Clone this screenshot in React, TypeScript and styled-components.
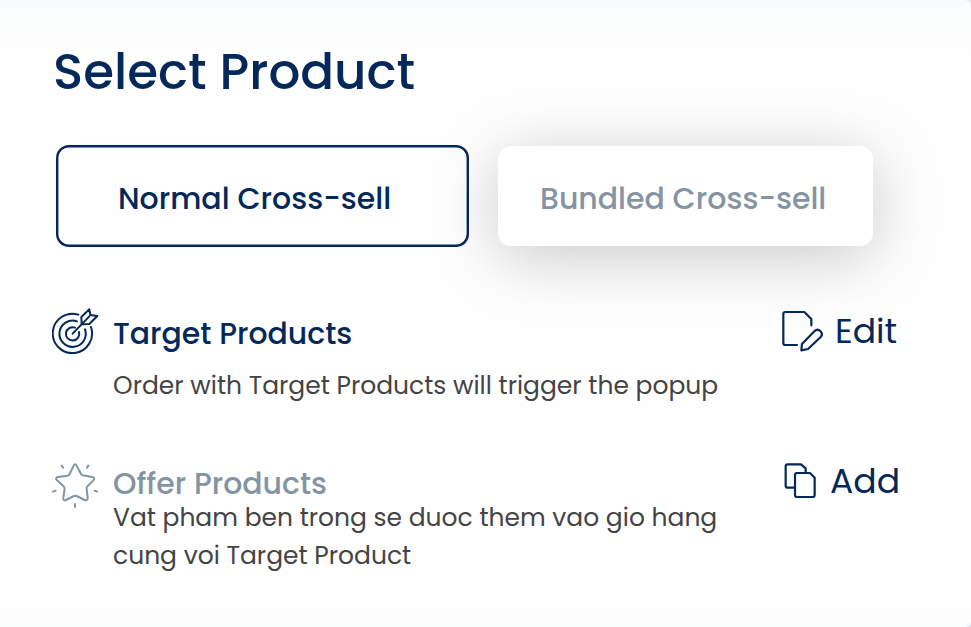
import React from "react";
import styled, { createGlobalStyle } from "styled-components";

const navy = "#05285a";
const slate = "#8594a3";

const GlobalStyle = createGlobalStyle`
  *, *::before, *::after { box-sizing: border-box; }
  body { margin: 0; background: #e3e6ef; font-family: Poppins, Inter, sans-serif; }
  h1, h2, p { margin: 0; font-weight: inherit; }
  button { font: inherit; border: 0; background: none; padding: 0; cursor: pointer; }
`;

const Card = styled.main`
  width: 971px;
  height: 627px;
  padding: 42px 50px 0 52px;
  overflow: hidden;
  border-radius: 0 6px 6px 0;
  background:
    linear-gradient(180deg, #f8fafc 0, rgba(251, 252, 253, 0.8) 20px, rgba(254, 254, 254, 0) 50px),
    linear-gradient(0deg, #fcfdfd 0, rgba(254, 254, 254, 0) 20px),
    #fefefe;
`;

const Title = styled.h1`
  padding-left: 1px;
  font-size: 49.95px;
  font-weight: 500;
  line-height: 60px;
  color: ${navy};
`;

const Options = styled.div`
  display: flex;
  align-items: center;
  gap: 29px;
  margin: 43px 0 0 4px;
`;

const Option = styled.button<{ $selected?: boolean }>`
  display: flex;
  align-items: center;
  width: ${(p) => (p.$selected ? 413 : 375)}px;
  height: ${(p) => (p.$selected ? 102 : 100)}px;
  padding: ${(p) => (p.$selected ? "6px 0 0 62px" : "6px 0 0 42px")};
  border-radius: 13px;
  background: ${(p) => (p.$selected ? "transparent" : "#fff")};
  box-shadow: ${(p) => (p.$selected ? `inset 0 0 0 2.4px ${navy}` : "0 11px 66px rgba(0, 0, 0, 0.21)")};
  font-size: 29.98px;
  font-weight: 500;
  line-height: 40px;
  white-space: nowrap;
  color: ${(p) => (p.$selected ? navy : slate)};
`;

const ProductRow = styled.section<{ $gapAbove: number }>`
  display: grid;
  grid-template-columns: 47px 614px 1fr;
  column-gap: 14px;
  align-items: start;
  margin-top: ${(p) => p.$gapAbove}px;
`;

const Details = styled.div<{ $offset: number }>`
  padding-top: ${(p) => p.$offset}px;
`;

const Heading = styled.h2<{ $muted?: boolean }>`
  font-size: 29.9px;
  font-weight: 500;
  line-height: 40px;
  color: ${(p) => (p.$muted ? slate : navy)};
`;

const Description = styled.p<{ $spacing: number }>`
  margin-top: ${(p) => p.$spacing}px;
  font-size: 24.97px;
  line-height: 37.5px;
  color: #444445;
`;

const Action = styled.button<{ $indent: number; $gap: number; $offset: number }>`
  display: flex;
  align-items: center;
  gap: ${(p) => p.$gap}px;
  height: 42px;
  margin: ${(p) => `${p.$offset}px 0 0 ${p.$indent}px`};
  font-size: 34.6px;
  line-height: 42px;
  color: ${navy};
`;

const Icon = styled.svg<{ $weight: number; $muted?: boolean }>`
  display: block;
  flex: none;
  fill: none;
  stroke: ${(p) => (p.$muted ? slate : navy)};
  stroke-width: ${(p) => p.$weight};
  stroke-linecap: round;
  stroke-linejoin: round;
`;

const TargetIcon = () => (
  <Icon $weight={6} width="47" height="46" viewBox="36 24 141 138">
    <path d="M115 44A59 59 0 1 0 153 81" />
    <path d="M111 64A39.5 39.5 0 1 0 135 88" />
    <path d="M105 83A20 20 0 1 0 117 96" />
    <path d="M98 101L148 49" />
    <path d="M125 73L124 51L148 28L151 45L172 48L148 72Z" />
  </Icon>
);

const StarIcon = () => (
  <Icon $weight={6} $muted width="47" height="46" viewBox="36 40 141 138">
    <path d="M100 50Q105 38 111 50L122 71Q124 76 129 77L156 82Q167 84 160 92L142 110Q139 113 140 118L143 144Q143 155 134 151L110 139Q106 137 102 139L78 151Q69 155 70 144L74 117Q74 113 71 110L51 92Q44 85 54 82L83 78Q87 77 89 73Z" />
    <path d="M65 48L69 54M145 48L141 54M39 126L47 123M164 123L171 126M105 163V172" />
  </Icon>
);

const EditIcon = () => (
  <Icon $weight={6.6} width="42" height="42" viewBox="36 30 126 126">
    <path d="M81 135H46Q40 135 40 129V42Q40 36 46 36H103L124 57V76" />
    <path d="M94 151L96 132L133 94Q142 85 151 93Q160 102 152 111L114 147Z" />
  </Icon>
);

const CopyIcon = () => (
  <Icon $weight={6.6} width="32" height="37" viewBox="42 36 96 111">
    <path d="M73 113H53Q47 113 47 107V49Q47 43 53 43H93L107 55V67" />
    <path d="M81 69H120L134 83V135Q134 141 128 141H81Q75 141 75 135V75Q75 69 81 69Z" />
  </Icon>
);

export default function App() {
  return (
    <>
      <GlobalStyle />
      <Card>
        <Title>Select Product</Title>
        <Options>
          <Option $selected>Normal Cross-sell</Option>
          <Option>Bundled Cross-sell</Option>
        </Options>

        <ProductRow $gapAbove={61}>
          <TargetIcon />
          <Details $offset={6}>
            <Heading>Target Products</Heading>
            <Description $spacing={13}>Order with Target Products will trigger the popup</Description>
          </Details>
          <Action $indent={41} $gap={11} $offset={2}>
            <EditIcon />
            Edit
          </Action>
        </ProductRow>

        <ProductRow $gapAbove={58}>
          <StarIcon />
          <Details $offset={1}>
            <Heading $muted>Offer Products</Heading>
            <Description $spacing={-4.5}>
              Vat pham ben trong se duoc them vao gio hang cung voi Target Product
            </Description>
          </Details>
          <Action $indent={43} $gap={14} $offset={-3}>
            <CopyIcon />
            Add
          </Action>
        </ProductRow>
      </Card>
    </>
  );
}
